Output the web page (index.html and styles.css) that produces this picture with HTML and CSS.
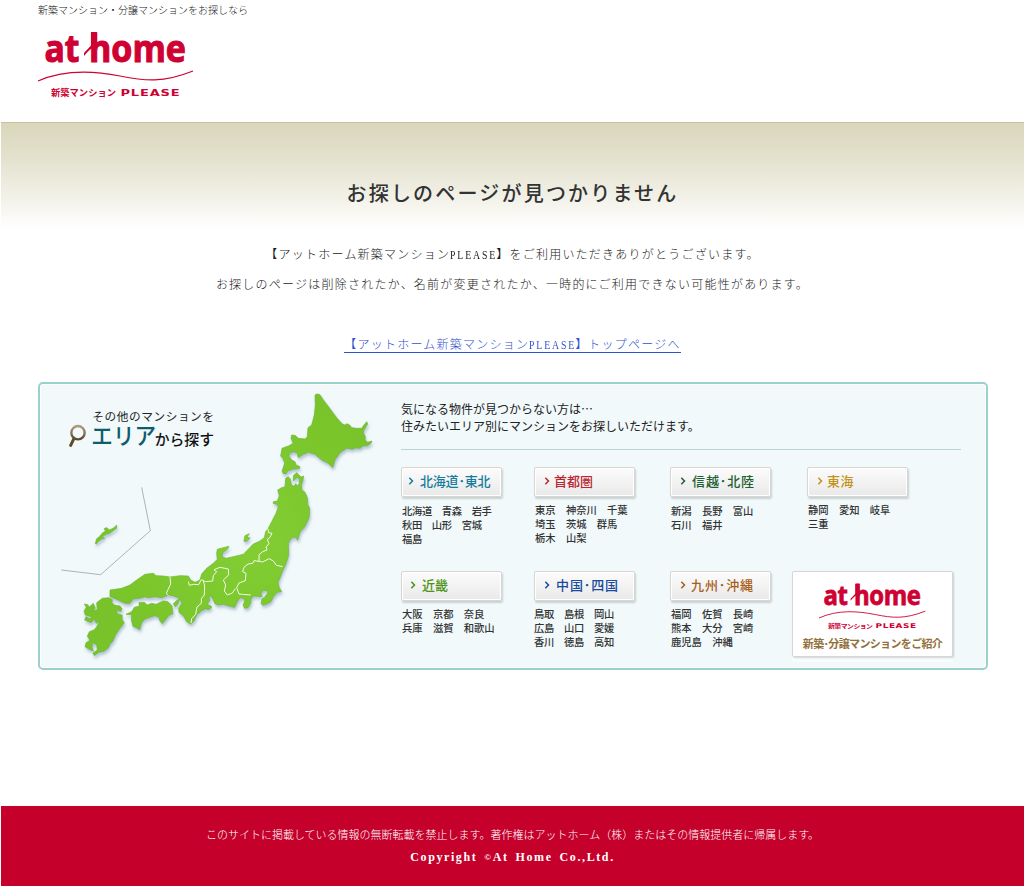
FILE: index.html
```html
<!DOCTYPE html>
<html lang="ja">
<head>
<meta charset="utf-8">
<title>お探しのページが見つかりません</title>
<link rel="stylesheet" href="styles.css">
</head>
<body>
<svg class="defs" width="0" height="0" aria-hidden="true">
  <symbol id="chev" viewBox="0 0 6 8"><path d="M1.300 .8L4.500 4L1.300 7.200" fill="none" stroke="currentColor" stroke-width="1.500"/></symbol>
</svg>

<header class="header">
  <p class="tagline">新築マンション・分譲マンションをお探しなら</p>
  <svg class="logo" viewBox="0 0 156 70">
    <text class="logo-word" x="6.500" y="31.500" textLength="35" lengthAdjust="spacingAndGlyphs">at</text>
    <text class="logo-word" x="51" y="31.500" textLength="97" lengthAdjust="spacingAndGlyphs">home</text>
    <path d="M46 26V23L53 15.500V2H59V14L57 17C53 18 50 21 46 26Z" fill="#cf0032"/>
    <path d="M0 51C28 38.500 57 41 82 46S125 53 155 41" fill="none" stroke="#cf0032" stroke-width="1.100"/>
    <text class="logo-ja" x="13" y="66" textLength="65" lengthAdjust="spacingAndGlyphs">新築マンション</text>
    <text class="logo-en" x="82.500" y="66" textLength="60" lengthAdjust="spacingAndGlyphs">PLEASE</text>
  </svg>
</header>

<main>
  <div class="band"><h1>お探しのページが見つかりません</h1></div>
  <div class="message">
    <p class="thanks">【アットホーム新築マンション<span class="latin">PLEASE</span>】をご利用いただきありがとうございます。</p>
    <p class="reason">お探しのページは削除されたか、名前が変更されたか、一時的にご利用できない可能性があります。</p>
    <p class="top"><a href="#">【アットホーム新築マンション<span class="latin">PLEASE</span>】トップページへ</a></p>
  </div>

  <section class="panel">
    <svg class="map" viewBox="30 27 1050 852">
      <defs>
        <radialGradient id="land" gradientUnits="userSpaceOnUse" cx="650" cy="480" r="480">
          <stop offset="0" stop-color="#82ce32"/><stop offset="1" stop-color="#78c32a"/>
        </radialGradient>
        <linearGradient id="lens" x1="0" y1="0" x2="0" y2="1"><stop offset="0" stop-color="#b29c80"/><stop offset="1" stop-color="#5c4a2a"/></linearGradient>
        <filter id="shade" x="-5%" y="-5%" width="110%" height="112%"><feDropShadow dx="3" dy="8" stdDeviation="4" flood-color="#8093b0" flood-opacity=".55"/></filter>
      </defs>
      <path d="M335 337L361 467L212 599L94 585" fill="none" stroke="#adb5b8" stroke-width="3"/>
      <g fill="url(#land)" stroke="#70b727" stroke-width="2" stroke-linejoin="round" filter="url(#shade)">
        <path d="M855 60L860 57 868 58 872 62 878 72 898 98 920 128 937 147 945 150 951 146 960 151 965 158 980 160 995 160 1002 150 1010 140 1013 147 1002 165 1000 175 1006 184 1005 195 1013 202 1026 198 1022 206 1010 213 1000 212 990 220 975 219 968 223 950 220 930 233 915 255 911 270 908 278 895 265 875 255 855 238 835 232 820 238 805 248 802 235 792 230 780 234 776 243 785 255 795 260 798 270 810 275 808 281 790 282 775 287 768 296 760 296 756 288 764 265 760 252 752 243 756 220 775 213 790 205 783 190 785 180 795 181 805 190 825 192 832 185 834 158 845 150 853 120 856 90Z"/>
        <path d="M767 310L775 305 781 312 784 330 792 334 797 326 803 333 808 325 808 310 800 308 790 318 790 302 800 293 807 300 813 306 821 303 819 315 814 330 816 345 825 352 832 368 833 388 839 400 838 425 830 445 822 458 812 468 808 478 803 496 798 487 788 487 780 495 775 505 776 540 770 560 764 575 757 590 750 608 744 622 748 638 755 650 742 652 730 665 723 680 710 687 698 691 693 685 696 672 702 668 713 655 712 647 700 646 693 655 696 665 685 664 670 663 663 672 662 685 654 698 644 700 639 690 645 678 640 670 630 668 622 680 614 697 600 694 580 688 563 690 555 686 549 673 543 662 537 665 539 678 532 685 534 690 545 694 543 700 534 704 528 701 515 707 500 720 492 738 482 747 470 740 460 722 447 712 446 700 455 685 450 672 438 665 420 660 410 662 395 668 375 665 355 668 345 665 328 670 310 672 300 685 285 685 270 678 258 672 240 665 240 645 255 643 275 640 300 630 320 615 345 598 370 595 378 602 400 603 420 606 450 602 475 603 482 615 495 622 510 615 515 597 530 580 550 565 562 553 560 535 562 523 580 518 597 514 592 523 578 533 576 545 588 550 610 545 640 538 670 507 690 498 703 488 707 470 715 460 725 440 738 415 745 395 740 388 730 386 730 380 742 378 748 362 743 345 755 338 765 335Z"/>
        <path d="M288 718L305 710 313 697 328 693 327 683 343 682 352 690 365 685 378 688 400 678 414 680 426 692 427 705 429 716 418 720 410 730 397 746 390 738 386 726 374 722 360 727 345 732 335 743 329 764 319 758 309 754 304 735 305 719Z"/>
        <path d="M200 683L217 670 237 668 247 674 246 683 253 690 270 693 276 701 273 709 259 706 262 716 277 721 276 733 283 744 270 760 257 779 249 798 240 808 235 819 222 829 207 832 193 842 189 834 202 825 200 809 188 803 186 816 190 828 178 823 165 815 168 803 180 796 172 784 178 770 193 764 203 751 208 738 199 745 193 733 183 743 164 735 168 725 180 732 185 725 166 720 162 708 169 697 163 687 173 689 178 696 190 685 196 700 187 707 202 704Z"/>
        <path d="M430 686L442 675 449 672 445 685 436 696Z"/>
        <path d="M645 482L658 476 651 487 660 489 650 499 642 499 643 490Z"/>
        <path d="M196 505L200 491 208 485 217 474 226 469 223 460 231 458 238 465 251 459 260 450 260 460 240 474 229 478 216 487 224 490 215 492 204 500 199 508Z"/>
      </g>
      <g fill="none" stroke="#f2fae8" stroke-width="3" stroke-linejoin="round">
        <path d="M714 462L716 473 726 475 720 487 712 493 717 506 708 516 711 525 698 530 687 539 687 559 697 561 718 551 731 559 739 571 758 575"/>
        <path d="M687 559L672 557 668 565 654 567 642 577 638 590 648 595 646 617 627 624 620 638 627 657 638 658 662 660"/>
        <path d="M420 606L422 627 414 644 409 655 415 662"/>
        <path d="M475 620L478 631 490 628 506 629 514 614 526 620 548 618 550 602 560 590 552 584 570 577 595 582 596 600 580 615 587 630 583 648 592 660 607 654 616 641M520 618L524 633 523 660 514 671 514 685 501 696 497 718 485 731 483 744"/>
      </g>
      <g fill="none" stroke-linecap="round">
        <path d="M132 190L122 211" stroke="#5b4b2c" stroke-width="9"/>
        <circle cx="144" cy="173" r="20" stroke="url(#lens)" stroke-width="7"/>
      </g>
      <text class="map-sub" x="187" y="138" textLength="365">その他のマンションを</text>
      <text class="map-title" x="184" y="208" textLength="194" lengthAdjust="spacingAndGlyphs">エリア</text>
      <text class="map-tail" x="374" y="209" textLength="178" lengthAdjust="spacingAndGlyphs">から探す</text>
    </svg>

    <div class="search">
      <p class="intro">気になる物件が見つからない方は…<br>住みたいエリア別にマンションをお探しいただけます。</p>
      <div class="areas">
        <div class="area hokkaido"><a class="btn" href="#"><svg><use href="#chev"/></svg>北海道<i>･</i>東北</a><p>北海道　青森　岩手<br>秋田　山形　宮城<br>福島</p></div>
        <div class="area shuto"><a class="btn" href="#"><svg><use href="#chev"/></svg>首都圏</a><p>東京　神奈川　千葉<br>埼玉　茨城　群馬<br>栃木　山梨</p></div>
        <div class="area shinetsu"><a class="btn" href="#"><svg><use href="#chev"/></svg>信越<i>･</i>北陸</a><p>新潟　長野　富山<br>石川　福井</p></div>
        <div class="area tokai"><a class="btn" href="#"><svg><use href="#chev"/></svg>東海</a><p>静岡　愛知　岐阜<br>三重</p></div>
        <div class="area kinki"><a class="btn" href="#"><svg><use href="#chev"/></svg>近畿</a><p>大阪　京都　奈良<br>兵庫　滋賀　和歌山</p></div>
        <div class="area chugoku"><a class="btn" href="#"><svg><use href="#chev"/></svg>中国<i>･</i>四国</a><p>鳥取　島根　岡山<br>広島　山口　愛媛<br>香川　徳島　高知</p></div>
        <div class="area kyushu"><a class="btn" href="#"><svg><use href="#chev"/></svg>九州<i>･</i>沖縄</a><p>福岡　佐賀　長崎<br>熊本　大分　宮崎<br>鹿児島　沖縄</p></div>
        <a class="banner" href="#">
          <svg viewBox="0 0 156 70">
            <text class="logo-word" x="6.500" y="31.500" textLength="35" lengthAdjust="spacingAndGlyphs">at</text>
            <text class="logo-word" x="51" y="31.500" textLength="97" lengthAdjust="spacingAndGlyphs">home</text>
            <path d="M46 26V23L53 15.500V2H59V14L57 17C53 18 50 21 46 26Z" fill="#cf0032"/>
            <path d="M0 51C28 38.500 57 41 82 46S125 53 155 41" fill="none" stroke="#cf0032" stroke-width="1.300"/>
            <text class="logo-ja" x="13" y="66" textLength="65" lengthAdjust="spacingAndGlyphs">新築マンション</text>
            <text class="logo-en" x="82.500" y="66" textLength="60" lengthAdjust="spacingAndGlyphs">PLEASE</text>
          </svg>
          <span>新築<i>･</i>分譲マンションをご紹介</span>
        </a>
      </div>
    </div>
  </section>
</main>

<footer class="footer">
  <p class="notice">このサイトに掲載している情報の無断転載を禁止します。著作権はアットホーム（株）またはその情報提供者に帰属します。</p>
  <p class="copy">Copyright <small>©</small>At Home Co.,Ltd.</p>
</footer>
</body>
</html>
```
FILE: styles.css
```css
* { box-sizing: border-box; margin: 0; padding: 0; }
body {
  width: 1024px;
  height: 886px;
  padding-left: 1px;
  display: flex;
  flex-direction: column;
  overflow: hidden;
  background: #fff;
  color: #1a1a1a;
  font-family: "Noto Sans CJK JP", sans-serif;
  font-weight: 300;
}
i { font-style: normal; }
.defs { position: absolute; }
.header { height: 122px; padding: 2px 0 0 37px; }
.tagline { font-size: 10px; line-height: 15px; }
.logo { display: block; width: 156px; height: 70px; margin-top: 13px; overflow: visible; }
.logo-word { font: bold 38px "Open Sans", sans-serif; fill: #cf0032; stroke: #cf0032; stroke-width: 1.1px; }
.logo-ja { font: bold 9px "Noto Sans CJK JP", sans-serif; fill: #cf0032; }
.logo-en { font: bold 9.5px "DejaVu Sans", sans-serif; letter-spacing: .6px; fill: #cf0032; }

.band {
  height: 108px;
  border-top: 1px solid #c9c09c;
  background: linear-gradient(#d9d6bb, #e6e4d2 40%, #fff);
  text-align: center;
  padding-top: 55px;
}
h1 { font-size: 20px; line-height: 30px; font-weight: 500; letter-spacing: 2.2px; color: #333; }
.message { height: 152px; padding-top: 9px; text-align: center; font-size: 12px; line-height: 30px; letter-spacing: 1.23px; }
.latin {
  display: inline-block;
  width: 46px;
  font: 13px/15px "Liberation Serif", serif;
  letter-spacing: 2.5px;
  transform: scaleX(.75);
  transform-origin: left;
  white-space: nowrap;
}
.reason { margin-top: 0; }
.top { margin-top: 30px; }
.top a { color: #2f52cc; text-decoration: none; border-bottom: 1px solid #2f52cc; display: inline-block; line-height: 14px; }

.panel {
  width: 950px;
  height: 288px;
  margin-left: 37px;
  display: flex;
  border: 2px solid #9bd1cc;
  border-radius: 5px;
  background: #f1f9fb;
  box-shadow: inset 0 0 0 1px #fff;
}
.map { width: 350px; height: 284px; flex: none; }
.map text { font-family: "Noto Sans CJK JP", sans-serif; }
.map-sub { font-size: 35px; font-weight: 400; fill: #222; }
.map-title { font-size: 69px; font-weight: 500; fill: #105c6c; }
.map-tail { font-size: 46px; font-weight: 500; fill: #111; }

.search { width: 571px; padding: 16px 0 0 11px; }
.intro { height: 50px; border-bottom: 1px solid #b5d6d5; font-size: 12px; line-height: 17px; font-weight: 400; color: #222; }
.areas { display: grid; grid-template-columns: 133px 136px 137px 154px; grid-template-rows: 104px 100px; padding-top: 17px; }
.btn {
  width: 101px;
  height: 30px;
  display: flex;
  align-items: center;
  padding: 0 0 3px 6px;
  border: 1px solid #d8d6ce;
  border-radius: 2px;
  background: linear-gradient(#fcfcfc, #e9e9e9);
  box-shadow: inset 0 0 0 1px #fff, 1px 2px 2px rgba(80, 90, 90, .25);
  font-size: 13px;
  font-weight: 500;
  white-space: nowrap;
  text-decoration: none;
}
.btn svg { width: 6px; height: 8px; margin-right: 6px; flex: none; }
.area p { margin: 6px 0 0 1px; font-size: 10.3px; line-height: 14px; font-weight: 500; color: #333; white-space: nowrap; }
.hokkaido .btn { color: #167c9d; letter-spacing: -.2px; }
.hokkaido p { margin-top: 7px; letter-spacing: -.35px; }
.shuto .btn { color: #b92831; padding-left: 9px; }
.shuto .btn svg, .tokai .btn svg { margin-right: 4px; }
.shinetsu .btn { color: #1d6130; padding-left: 9px; }
.shinetsu p { margin-top: 7px; }
.tokai .btn { color: #c2931a; padding-left: 9px; letter-spacing: .5px; }
.kinki .btn { color: #4e9414; padding-left: 8px; }
.chugoku .btn { color: #194aa0; padding-left: 9px; }
.kyushu .btn { color: #a85e20; padding-left: 9px; }
.kyushu .btn svg { margin-right: 5px; }
.shinetsu .btn, .chugoku .btn, .kyushu .btn { letter-spacing: .9px; }
.chugoku p { margin-left: 0; letter-spacing: -.3px; }
.banner {
  width: 161px;
  height: 86px;
  margin-left: -15px;
  display: flex;
  flex-direction: column;
  align-items: center;
  padding-top: 11px;
  border: 1px solid #d4d8d4;
  border-radius: 2px;
  background: #fff;
  box-shadow: 1px 1px 2px rgba(80, 90, 90, .25), 0 5px 0 #fafdfe;
  color: #92703a;
  font-size: 11px;
  line-height: 16px;
  font-weight: 700;
  letter-spacing: -.65px;
  text-decoration: none;
  white-space: nowrap;
}
.banner svg { width: 107px; height: 48px; margin-bottom: 4px; flex: none; overflow: visible; }

.footer { height: 80px; margin-top: auto; padding-top: 20px; background: #c4002b; color: #fff; text-align: center; }
.notice { font-size: 11px; line-height: 16px; font-weight: 300; }
.copy { margin-top: 7px; font: bold 12px/16px "Liberation Serif", serif; letter-spacing: 1.6px; word-spacing: 2.4px; }
.copy small { font-size: 9px; vertical-align: 1px; }
```
